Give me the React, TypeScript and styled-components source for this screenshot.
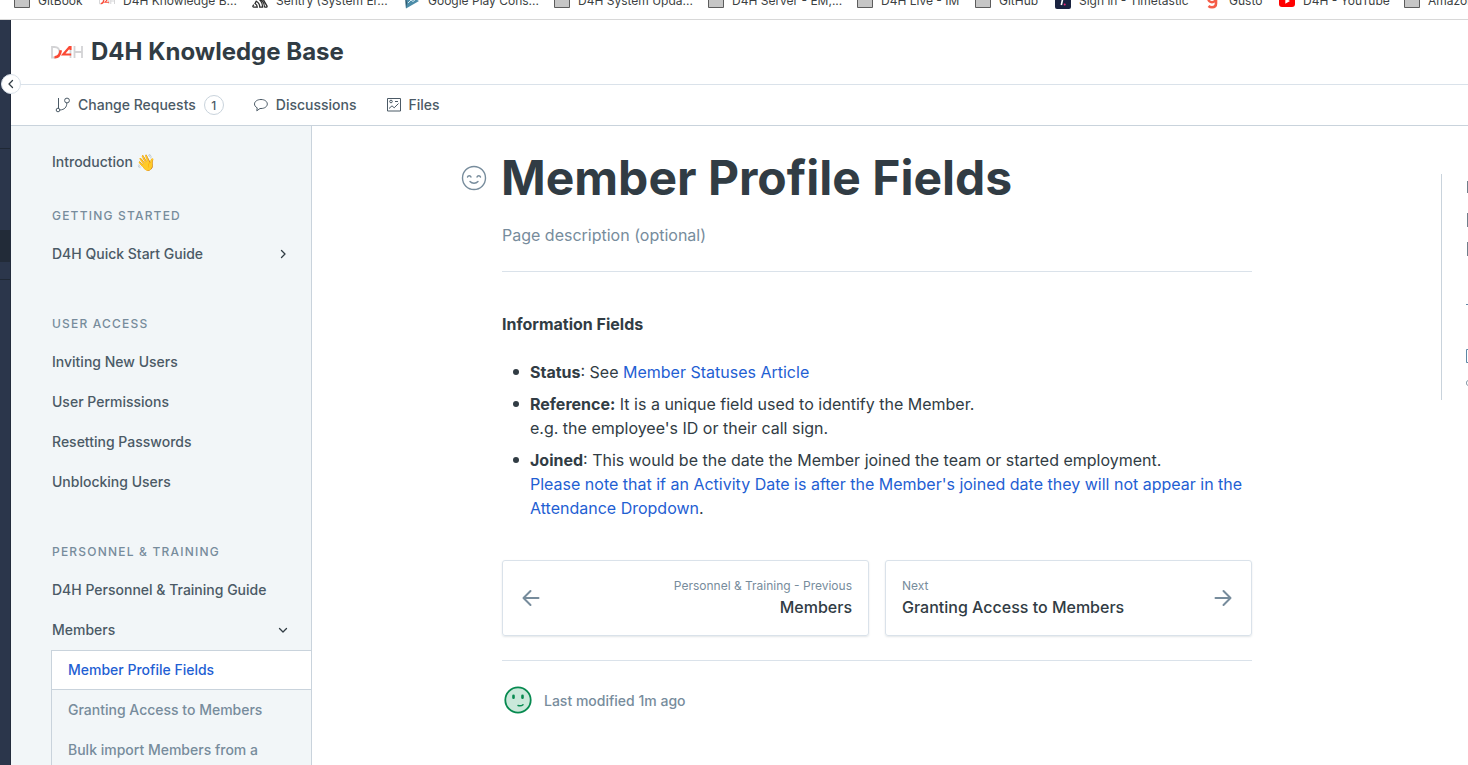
import React from 'react';
import styled, { createGlobalStyle } from 'styled-components';

const color = {
  text: '#313c44',
  nav: '#4b5a66',
  muted: '#778c9c',
  line: '#dae2ea',
  edge: '#c9d3dc',
  link: '#1f60d3',
  rail: '#2b364b',
};

const GlobalStyle = createGlobalStyle`
  *, *::before, *::after { box-sizing: border-box; }
  body {
    margin: 0;
    font-family: Inter, "Liberation Sans", sans-serif;
    font-size: 16px;
    line-height: 24px;
    color: ${color.text};
    background: #fff;
  }
  a { color: inherit; text-decoration: none; }
  button { font: inherit; color: inherit; border: 0; padding: 0; background: none; cursor: pointer; }
  h1, h2, p, ul { margin: 0; padding: 0; }
  ul { list-style: none; }
  svg { display: block; flex: none; }
`;

const Page = styled.div`
  display: flex;
  flex-direction: column;
  height: 100vh;
  overflow: hidden;
`;

const BookmarksBar = styled.nav`
  display: flex;
  flex: none;
  align-items: flex-end;
  gap: 16px;
  height: 20px;
  padding: 0 0 8px 14px;
  border-bottom: 1px solid #d8d8d8;
  overflow: hidden;
`;

const Bookmark = styled.a`
  display: flex;
  flex: none;
  align-items: center;
  gap: 8px;
  height: 20px;
  font-size: 12px;
  line-height: 20px;
  color: #3c3f42;
  white-space: nowrap;
`;

const BookmarkLabel = styled.span<{ $width: number }>`
  width: ${(p) => p.$width}px;
`;

const Shell = styled.div`
  display: flex;
  flex: 1;
  min-height: 0;
`;

const Rail = styled.div`
  position: relative;
  flex: none;
  width: 11px;
  padding-top: 128px;
  background: ${color.rail};
  border-right: 1px solid #232c3d;
`;

const RailGroup = styled.div`
  height: 132px;
  padding-top: 81px;
  border-top: 1px solid #1f2835;
  border-bottom: 1px solid #1f2835;
`;

const RailCurrent = styled.div`
  height: 32px;
  background: #222b38;
`;

const CollapseButton = styled.button`
  position: absolute;
  top: 54px;
  left: 1px;
  display: grid;
  place-items: center;
  width: 20px;
  height: 20px;
  border: 1px solid ${color.line};
  border-radius: 50%;
  background: #fff;
`;

const Workspace = styled.div`
  display: flex;
  flex: 1;
  flex-direction: column;
  min-width: 0;
`;

const SpaceHeader = styled.header`
  display: flex;
  flex: none;
  align-items: center;
  gap: 8px;
  height: 65px;
  padding: 0 40px;
  border-bottom: 1px solid ${color.line};
`;

const SpaceName = styled.span`
  font-size: 24px;
  line-height: 32px;
  font-weight: 700;
`;

const Tabs = styled.nav`
  display: flex;
  flex: none;
  align-items: center;
  gap: 28px;
  height: 41px;
  padding: 0 43px;
  border-bottom: 1px solid ${color.edge};
`;

const Tab = styled.a`
  display: flex;
  align-items: center;
  gap: 8px;
  font-size: 14px;
  line-height: 20px;
  font-weight: 500;
  color: ${color.nav};
`;

const Count = styled.span`
  display: grid;
  place-items: center;
  width: 20px;
  height: 20px;
  border: 1px solid ${color.edge};
  border-radius: 50%;
  font-size: 12px;
`;

const Columns = styled.div`
  display: flex;
  flex: 1;
  min-height: 0;
`;

const Sidebar = styled.nav`
  flex: none;
  width: 301px;
  padding: 16px 0 0 40px;
  background: #f2f6f8;
  border-right: 1px solid ${color.edge};
  overflow: hidden;
`;

const NavGroup = styled.section<{ $gap?: number }>`
  margin-bottom: ${(p) => p.$gap ?? 40}px;
`;

const NavHeading = styled.h2`
  padding: 0 0 8px 1px;
  font-size: 12px;
  line-height: 20px;
  font-weight: 500;
  letter-spacing: 0.1em;
  text-transform: uppercase;
  color: ${color.muted};
`;

const NavItem = styled.a`
  display: flex;
  align-items: center;
  height: 40px;
  padding: 0 22px 0 1px;
  font-size: 14px;
  line-height: 20px;
  font-weight: 500;
  color: ${color.nav};
  svg { margin-left: auto; }
`;

const Wave = styled.span`
  margin-left: 3px;
  font-size: 16px;
`;

const SubList = styled.div`
  border-left: 1px solid ${color.edge};
`;

const SubItem = styled(NavItem)<{ $current?: boolean }>`
  padding-left: 16px;
  color: ${(p) => (p.$current ? color.link : color.muted)};
  background: ${(p) => (p.$current ? '#fff' : 'none')};
  border-top: 1px solid ${(p) => (p.$current ? color.edge : 'transparent')};
  border-bottom: 1px solid ${(p) => (p.$current ? color.edge : 'transparent')};
`;

const Main = styled.main`
  flex: 1;
  min-width: 0;
  padding: 20px 0 0 1px;
`;

const Article = styled.article`
  width: 100%;
  max-width: 750px;
  margin: 0 auto;
`;

const TitleRow = styled.div`
  display: flex;
  align-items: center;
  gap: 14px;
  margin-left: -41px;
`;

const Title = styled.h1`
  font-size: 48px;
  line-height: 64px;
  font-weight: 700;
  white-space: nowrap;
`;

const Description = styled.input`
  display: block;
  width: 100%;
  height: 24px;
  margin: 13px 0 24px;
  padding: 0;
  border: 0;
  outline: 0;
  background: none;
  font: inherit;
  color: inherit;
  &::placeholder { color: ${color.muted}; opacity: 1; }
`;

const Rule = styled.hr`
  height: 1px;
  margin: 0;
  border: 0;
  background: ${color.line};
`;

const Subheading = styled.h2`
  margin: 40px 0 24px;
  font-size: 16px;
  line-height: 24px;
  font-weight: 700;
`;

const FieldList = styled.ul`
  display: grid;
  gap: 8px;
  padding-left: 28px;
`;

const Field = styled.li`
  position: relative;
  &::before {
    content: '';
    position: absolute;
    top: 9px;
    left: -17px;
    width: 6px;
    height: 6px;
    border-radius: 50%;
    background: ${color.text};
  }
`;

const TextLink = styled.a`
  color: ${color.link};
`;

const Pager = styled.nav`
  display: grid;
  grid-template-columns: 1fr 1fr;
  gap: 16px;
  margin: 40px 0 24px;
`;

const PagerCard = styled.a<{ $end?: boolean }>`
  display: flex;
  align-items: center;
  justify-content: space-between;
  height: 76px;
  padding: 0 16px;
  text-align: ${(p) => (p.$end ? 'right' : 'left')};
  border: 1px solid ${color.line};
  border-radius: 3px;
  box-shadow: 0 1px 2px rgba(116, 129, 141, 0.2);
  color: ${color.muted};
`;

const PagerText = styled.span`
  padding-bottom: 2px;
`;

const PagerHint = styled.span`
  display: block;
  font-size: 12px;
  line-height: 20px;
`;

const PagerTitle = styled.span`
  display: block;
  line-height: 22px;
  font-weight: 500;
  color: ${color.text};
`;

const Modified = styled.footer`
  display: flex;
  align-items: center;
  gap: 11px;
  padding: 25px 2px;
  font-size: 14px;
  line-height: 20px;
  font-weight: 500;
  color: ${color.muted};
`;

const Outline = styled.aside`
  flex: none;
  width: 27px;
  height: 226px;
  margin-top: 48px;
  padding-left: 24px;
  border-left: 1px solid ${color.edge};
`;

const FolderIcon = () => (
  <svg width="16" height="16" viewBox="0 0 16 16">
    <path d="M.5 2.5h15v12H.5z" fill="#c6c6c6" stroke="#5c5c5c" />
  </svg>
);

const D4HLogo = ({ width }: { width: number }) => (
  <svg width={width} height={width / 2} viewBox="0 0 32 16" fill="none">
    <path d="M1 3v10.500h2.500c3.500 0 5-2 5-5.300S7 3 3.500 3z" stroke="#d3d3d5" strokeWidth="1.800" />
    <path d="M19.500 6v8M23.500 2v12M31 2v12M23.500 8H31" stroke="#d3d3d5" strokeWidth="1.800" />
    <path d="M3.500 13.200c3.500.2 5.500-2.200 6.300-7" stroke="#fb4934" strokeWidth="2.600" />
    <path d="M18.800 2.800L12.200 10.500h8M19.500 2v4" stroke="#fb4934" strokeWidth="2.200" />
  </svg>
);

const SentryIcon = () => (
  <svg width="16" height="16" viewBox="0 0 16 16" fill="none" stroke="#2b2b2b" strokeWidth="1.300">
    <path d="M5.600 5.200l1.300-2.400c.5-.9 1.700-.9 2.200 0l5.800 10c.4.800 0 1.400-.8 1.400h-1.700M5.600 5.200c3.200 1.800 5 5 5 9H7.800c0-2.600-1.200-4.700-3.500-6L3 10.500c1.500.9 2.200 2.100 2.300 3.700H1.800c-.8 0-1.200-.7-.8-1.400l.8-1.200M7.300 5.500c3.700 2 5.200 5 5.200 8.700" />
  </svg>
);

const PlayConsoleIcon = () => (
  <svg width="16" height="16" viewBox="0 0 16 16">
    <path d="M1 0l14 8L2 15.500z" fill="#4c8ca8" />
    <path d="M1 0l2 10-1 5.500z" fill="#2b5468" />
    <path d="M4 10l3-3 2 1.500L12 6" fill="none" stroke="#d7ebf3" />
  </svg>
);

const TimetasticIcon = () => (
  <svg width="16" height="16" viewBox="0 0 16 16">
    <rect width="16" height="16" rx="2" fill="#1a2340" />
    <path d="M4 4.500h7M8 4.500L6.300 12" stroke="#fff" strokeWidth="1.600" />
    <circle cx="9.700" cy="11.500" r="1" fill="#f0287d" />
  </svg>
);

const GustoIcon = () => (
  <svg width="16" height="16" viewBox="0 0 16 16" fill="none" stroke="#f45d48" strokeWidth="2.600">
    <circle cx="7" cy="5.500" r="3.700" />
    <path d="M11 2v8.500c0 2.500-1.500 3.700-4 3.700-1.500 0-2.600-.4-3.500-1.200" />
  </svg>
);

const YouTubeIcon = () => (
  <svg width="16" height="16" viewBox="0 0 16 16">
    <rect y="2" width="16" height="12" rx="3" fill="#f00" />
    <path d="M6.300 5.200v5.600L11 8z" fill="#fff" />
  </svg>
);

const ChangeRequestIcon = () => (
  <svg width="16" height="16" viewBox="0 0 16 16" fill="none" stroke="currentColor">
    <path d="M4.500 1v10.500" />
    <circle cx="4" cy="13" r="1.800" />
    <circle cx="13" cy="3.500" r="2.400" />
    <path d="M12.800 6c0 4.200-2.200 6.700-7 7" />
  </svg>
);

const DiscussionIcon = () => (
  <svg width="16" height="16" viewBox="0 0 16 16" fill="none" stroke="currentColor" strokeLinejoin="round">
    <path d="M9 2.500c3.700 0 6.300 2 6.300 4.500S12.700 11.500 9 11.500H8l-3.200 2.300.4-3C3.500 10 2.500 8.600 2.500 7 2.500 4.500 5.300 2.500 9 2.500z" />
  </svg>
);

const FilesIcon = () => (
  <svg width="16" height="16" viewBox="0 0 16 16" fill="none" stroke="currentColor">
    <path d="M2.500 1.500h13v12.500h-13z" />
    <path d="M4 11.500l3-2.700 2.200 2L13.500 6.500" />
    <circle cx="6" cy="4.500" r="1.300" />
    <path d="M10 4.500h3" />
  </svg>
);

const Chevron = ({ d }: { d: string }) => (
  <svg width="12" height="12" viewBox="0 0 12 12" fill="none" stroke={color.text} strokeWidth="1.300" strokeLinecap="round" strokeLinejoin="round">
    <path d={d} />
  </svg>
);

const SmileIcon = () => (
  <svg width="26" height="26" viewBox="0 0 26 26" fill="none" stroke={color.muted} strokeWidth="1.400" strokeLinecap="round">
    <circle cx="13" cy="13" r="11.500" />
    <path d="M6.500 12c.5-1.600 3-1.600 3.500 0M16 12c.5-1.600 3-1.600 3.500 0M9 16.500c2 2.300 6 2.300 8 0" />
  </svg>
);

const ArrowIcon = ({ d }: { d: string }) => (
  <svg width="24" height="24" viewBox="0 0 24 24" fill="none" stroke={color.muted} strokeWidth="2" strokeLinecap="round" strokeLinejoin="round">
    <path d={d} />
  </svg>
);

const AvatarFace = () => (
  <svg width="29" height="29" viewBox="0 0 29 29" fill="none" stroke="#078a50" strokeWidth="1.800" strokeLinecap="round">
    <circle cx="14" cy="14" r="12.700" fill="#cae8da" />
    <path d="M9.500 9.700v2M18.500 9.700v2" strokeWidth="2.600" />
    <path d="M14 19.500c2 .6 3.800.3 5-.8" strokeWidth="1.500" />
  </svg>
);

const OutlineIcons = () => (
  <svg width="2" height="226" viewBox="0 0 2 226" fill="none">
    <path d="M1.500 7v12M1.500 39v14M1.500 68v14" stroke="#6f7f8b" />
    <path d="M0 130.500h2M2 175.500H.500v13H2" stroke="#5d87a5" />
    <path d="M2 206.500C0 207 0 211 2 211.500" stroke="#74899a" />
  </svg>
);

const bookmarks: { label: string; icon: React.ReactNode; width: number }[] = [
  { label: 'GitBook', icon: <FolderIcon />, width: 45 },
  { label: 'D4H Knowledge B...', icon: <D4HLogo width={16} />, width: 113 },
  { label: 'Sentry (System Er...', icon: <SentryIcon />, width: 112 },
  { label: 'Google Play Cons...', icon: <PlayConsoleIcon />, width: 110 },
  { label: 'D4H System Upda...', icon: <FolderIcon />, width: 114 },
  { label: 'D4H Server - EM,...', icon: <FolderIcon />, width: 109 },
  { label: 'D4H Live - IM', icon: <FolderIcon />, width: 78 },
  { label: 'GitHub', icon: <FolderIcon />, width: 40 },
  { label: 'Sign in - Timetastic', icon: <TimetasticIcon />, width: 110 },
  { label: 'Gusto', icon: <GustoIcon />, width: 34 },
  { label: 'D4H - YouTube', icon: <YouTubeIcon />, width: 85 },
  { label: 'Amazon', icon: <FolderIcon />, width: 60 },
];

export default function App() {
  return (
    <Page>
      <GlobalStyle />
      <BookmarksBar aria-label="Bookmarks">
        {bookmarks.map((b) => (
          <Bookmark href="#" key={b.label}>
            {b.icon}
            <BookmarkLabel $width={b.width}>{b.label}</BookmarkLabel>
          </Bookmark>
        ))}
      </BookmarksBar>
      <Shell>
        <Rail>
          <RailGroup>
            <RailCurrent />
          </RailGroup>
          <CollapseButton aria-label="Collapse">
            <Chevron d="M7.500 2.500L4 6l3.500 3.500" />
          </CollapseButton>
        </Rail>
        <Workspace>
          <SpaceHeader>
            <D4HLogo width={32} />
            <SpaceName>D4H Knowledge Base</SpaceName>
          </SpaceHeader>
          <Tabs>
            <Tab href="#">
              <ChangeRequestIcon />
              Change Requests
              <Count>1</Count>
            </Tab>
            <Tab href="#">
              <DiscussionIcon />
              Discussions
            </Tab>
            <Tab href="#">
              <FilesIcon />
              Files
            </Tab>
          </Tabs>
          <Columns>
            <Sidebar>
              <NavGroup $gap={24}>
                <NavItem href="#">
                  Introduction <Wave>👋</Wave>
                </NavItem>
              </NavGroup>
              <NavGroup>
                <NavHeading>Getting Started</NavHeading>
                <NavItem href="#">
                  D4H Quick Start Guide
                  <Chevron d="M4.500 2.500L8 6l-3.500 3.500" />
                </NavItem>
              </NavGroup>
              <NavGroup>
                <NavHeading>User Access</NavHeading>
                <NavItem href="#">Inviting New Users</NavItem>
                <NavItem href="#">User Permissions</NavItem>
                <NavItem href="#">Resetting Passwords</NavItem>
                <NavItem href="#">Unblocking Users</NavItem>
              </NavGroup>
              <NavGroup>
                <NavHeading>Personnel &amp; Training</NavHeading>
                <NavItem href="#">D4H Personnel &amp; Training Guide</NavItem>
                <NavItem href="#">
                  Members
                  <Chevron d="M2.500 4.500L6 8l3.500-3.500" />
                </NavItem>
                <SubList>
                  <SubItem href="#" $current>Member Profile Fields</SubItem>
                  <SubItem href="#">Granting Access to Members</SubItem>
                  <SubItem href="#">Bulk import Members from a</SubItem>
                </SubList>
              </NavGroup>
            </Sidebar>
            <Main>
              <Article>
                <TitleRow>
                  <button aria-label="Choose page emoji">
                    <SmileIcon />
                  </button>
                  <Title>Member Profile Fields</Title>
                </TitleRow>
                <Description aria-label="Page description" placeholder="Page description (optional)" />
                <Rule />
                <Subheading>Information Fields</Subheading>
                <FieldList>
                  <Field>
                    <strong>Status</strong>: See <TextLink href="#">Member Statuses Article</TextLink>
                  </Field>
                  <Field>
                    <strong>Reference:</strong> It is a unique field used to identify the Member.
                    <br />
                    e.g. the employee's ID or their call sign.
                  </Field>
                  <Field>
                    <strong>Joined</strong>: This would be the date the Member joined the team or started employment.
                    <br />
                    <TextLink href="#">
                      Please note that if an Activity Date is after the Member's joined date they will not appear in the
                      Attendance Dropdown
                    </TextLink>
                    .
                  </Field>
                </FieldList>
                <Pager>
                  <PagerCard href="#" $end>
                    <ArrowIcon d="M19.500 12H5M11.500 5L4.500 12l7 7" />
                    <PagerText>
                      <PagerHint>Personnel &amp; Training - Previous</PagerHint>
                      <PagerTitle>Members</PagerTitle>
                    </PagerText>
                  </PagerCard>
                  <PagerCard href="#">
                    <PagerText>
                      <PagerHint>Next</PagerHint>
                      <PagerTitle>Granting Access to Members</PagerTitle>
                    </PagerText>
                    <ArrowIcon d="M4.500 12H19M12.500 5l7 7-7 7" />
                  </PagerCard>
                </Pager>
                <Rule />
                <Modified>
                  <AvatarFace />
                  Last modified 1m ago
                </Modified>
              </Article>
            </Main>
            <Outline>
              <OutlineIcons />
            </Outline>
          </Columns>
        </Workspace>
      </Shell>
    </Page>
  );
}
